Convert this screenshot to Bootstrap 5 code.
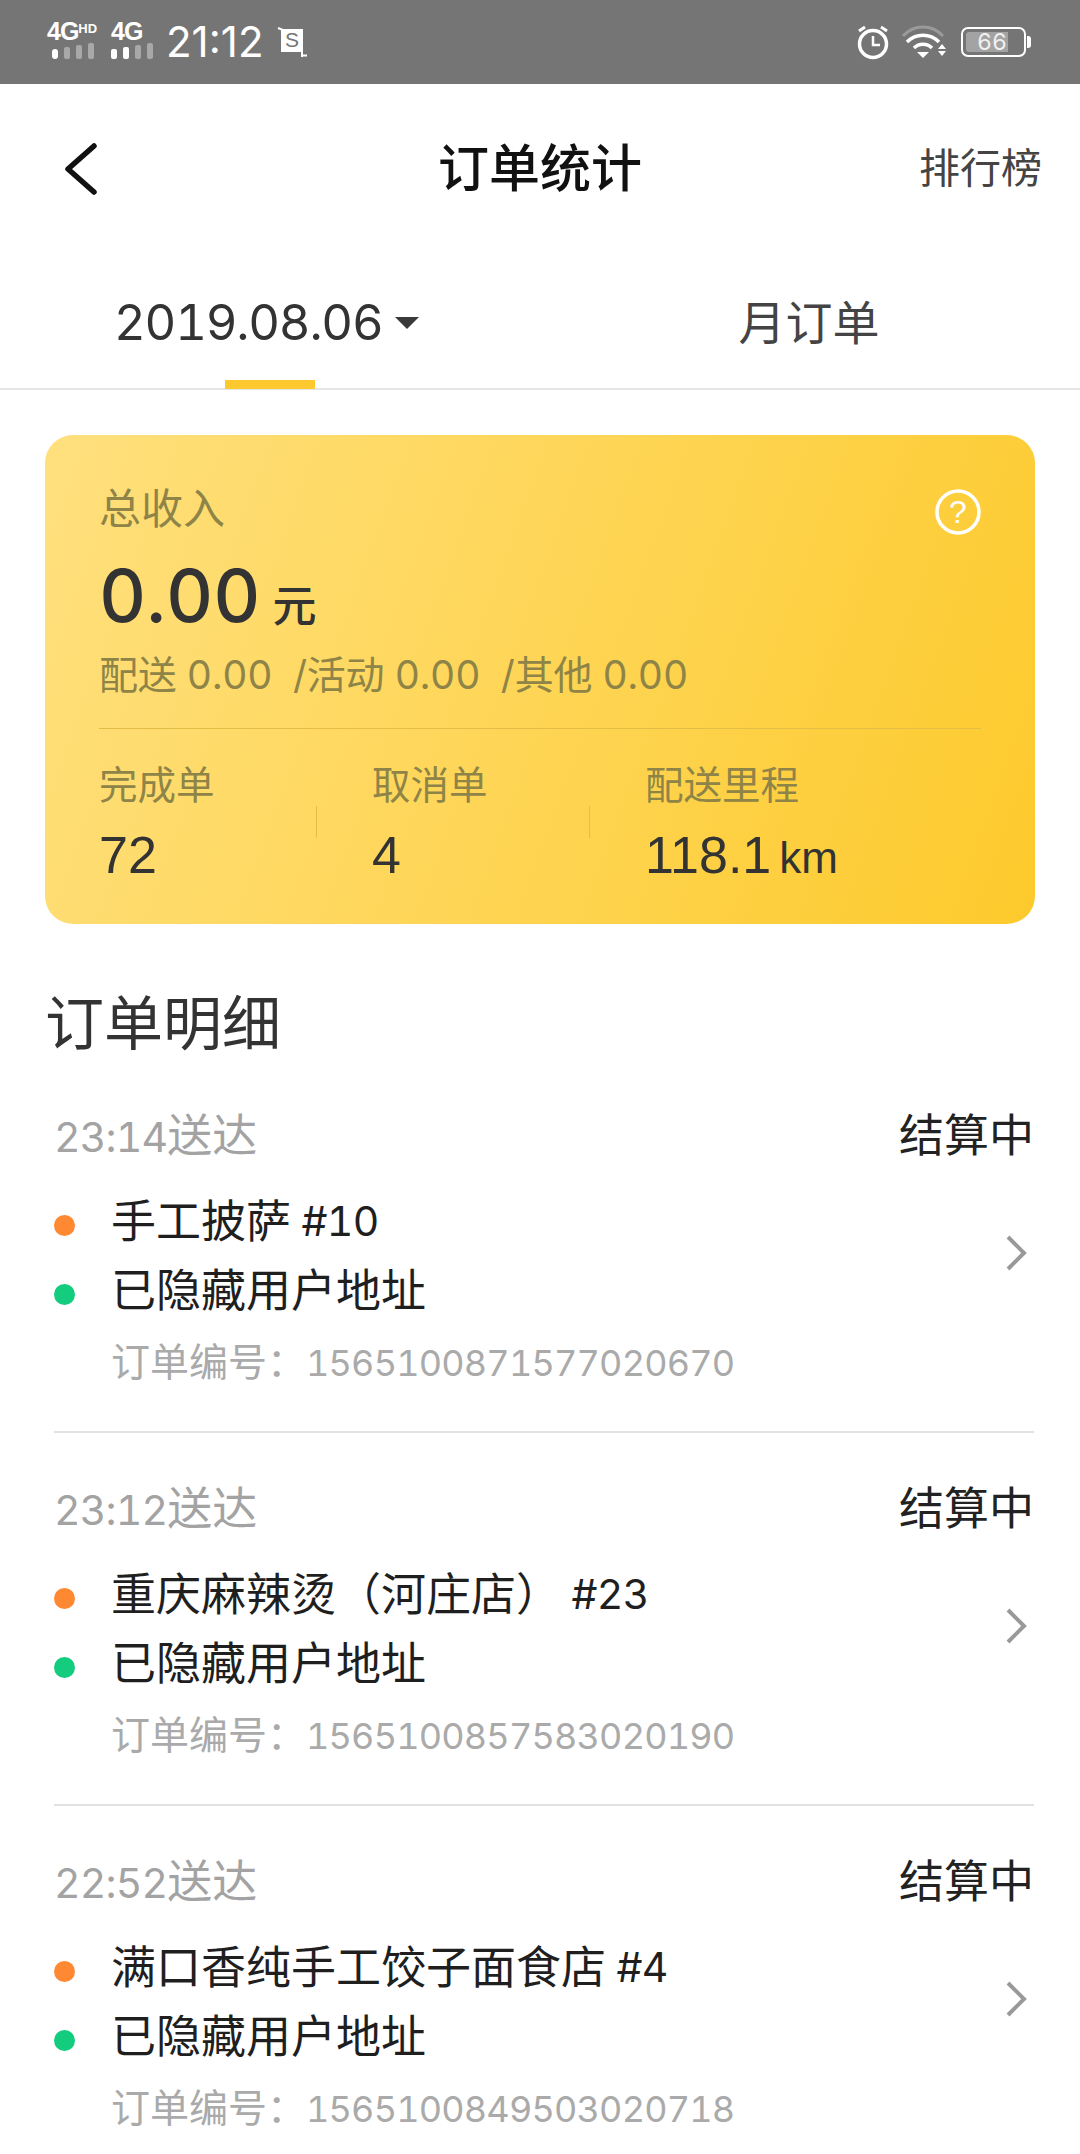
<!DOCTYPE html>
<html lang="zh">
<head>
    <meta charset="utf-8">
    <title>订单统计</title>
    <link href="https://cdn.jsdelivr.net/npm/bootstrap@5.3.3/dist/css/bootstrap.min.css" rel="stylesheet">
    <style>
        body {
            font-family: Inter, "Noto Sans CJK SC", sans-serif;
            font-variant-numeric: tabular-nums;
            background: #fff;
            color: #333;
            height: 2154px;
            overflow: hidden;
        }
        .status-bar { height: 84px; background: #757575; color: #fff; padding: 0 50px 0 47px; }
        .sig-block { margin-bottom: 3px; }
        .sig-label { font-family: "Liberation Sans", sans-serif; font-size: 25px; font-weight: 700; line-height: 20px; letter-spacing: -1px; }
        .sig-label sup { font-size: 13px; top: -7px; vertical-align: baseline; position: relative; letter-spacing: 0; }
        .clock { font-size: 42px; font-variant-numeric: proportional-nums; line-height: 84px; margin: 0 13px 0 13px; }
        .alarm-icon { margin-right: 12px; }
        .wifi-icon { margin-right: 14px; }
        .batt { width: 65px; height: 30px; border: 2px solid #fff; border-radius: 7px; padding: 3px; position: relative; margin-right: 4px; }
        .batt::after { content: ""; position: absolute; right: -7px; top: 7px; width: 4px; height: 12px; background: #fff; border-radius: 0 3px 3px 0; }
        .batt-fill { width: 42px; height: 100%; background: #a3a3a3; border-radius: 3px 0 0 3px; color: #f0f0f0; font-size: 23px; line-height: 20px; padding-left: 11px; }
        .top-nav { height: 170px; padding: 0 38px 0 63px; }
        .top-left { width: 200px; }
        .top-right { width: 225px; }
        .top-title { font-size: 51px; font-weight: 500; color: #111; }
        .top-link { font-size: 41px; color: #444; }
        .tab-row { height: 136px; border-bottom: 2px solid #e6e6e6; }
        .tab-day { width: 522px; padding-left: 114px; padding-top: 4px; font-size: 49px; letter-spacing: -1.2px; position: relative; }
        .tab-day::after { content: ""; position: absolute; left: 225px; bottom: -1px; width: 90px; height: 9px; background: #fdc92f; }
        .tab-caret { width: 0; height: 0; border: 12px solid transparent; border-top: 12px solid #3a3a3a; border-bottom: 0; margin-left: 12px; }
        .tab-month { width: 558px; padding-left: 16px; text-align: center; line-height: 138px; font-size: 47px; color: #444; }
        .income-card { height: 489px; margin: 45px 45px 0; padding: 49px 54px 0 54px; border-radius: 28px; background: linear-gradient(110deg, #ffe07e 0%, #fdca2c 100%); }
        .income-label { font-size: 42px; line-height: 50px; color: #8f8447; }
        .income-help { position: absolute; right: 54px; top: 54px; }
        .income-total { font-size: 73px; font-weight: 500; line-height: 90px; margin-top: 17px; color: #333; }
        .income-total span { font-size: 44px; margin-left: 12px; }
        .income-parts { font-size: 39px; letter-spacing: -.2px; line-height: 50px; margin-top: -1px; color: #8f8447; white-space: pre; }
        .income-line { border-top: 1px solid #e3bd45; margin-top: 28px; }
        .stat-col { width: 273px; position: relative; padding-top: 31px; }
        .stat-col + .stat-col::before { content: ""; position: absolute; left: -56px; top: 77px; height: 32px; border-left: 1px solid #e3bd45; }
        .stat-label { font-size: 38.5px; line-height: 50px; color: #8f8447; }
        .stat-num { font-family: "Liberation Sans", sans-serif; font-size: 52px; line-height: 70px; margin-top: 10px; color: #333; }
        .stat-num span { font-size: 44px; margin-left: 8px; }
        .section-title { font-size: 59px; line-height: 68px; margin: 66px 0 2px 45px; color: #333; }
        .order-row { height: 373px; margin: 0 46px 0 54px; padding-top: 46px; border-bottom: 2px solid #e2e2e2; }
        .order-head { line-height: 60px; font-size: 41px; }
        .order-time { color: #a3a3a3; letter-spacing: -.8px; }
        .order-state { color: #222; font-size: 45px; }
        .order-lines { margin-top: 20px; padding-right: 7px; }
        .order-line { line-height: 69px; font-size: 41px; letter-spacing: -.6px; color: #1f1f1f; white-space: pre; }
        .order-line b { font-weight: 400; font-size: 45px; letter-spacing: 0; }
        .order-dot { width: 21px; height: 21px; border-radius: 50%; margin-right: 36px; margin-top: 7px; }
        .dot-shop { background: #ff8833; }
        .dot-user { background: #13cc7d; }
        .order-arrow { margin-top: -6px; }
        .order-no { line-height: 70px; font-size: 36px; letter-spacing: -.8px; color: #aaa; padding-left: 57px; margin-top: 2px; }
        .order-no b { font-weight: 400; font-size: 39px; letter-spacing: 0; }
        .order-time b { font-weight: 400; font-size: 45px; letter-spacing: 0; }
    </style>
</head>
<body>
    <div class="status-bar d-flex align-items-center">
        <div class="sig-block me-2 pe-1">
            <div class="sig-label">4G<sup>HD</sup></div>
            <svg class="d-block" width="52" height="20" viewBox="0 0 52 20"><rect x="5" y="8" width="6" height="10" rx="3" fill="#fff"/><g fill="#a8a8a8"><rect x="17" y="6" width="6" height="12" rx="2"/><rect x="29" y="4" width="6" height="14" rx="2"/><rect x="41" y="2" width="6" height="16" rx="2"/></g></svg>
        </div>
        <div class="sig-block">
            <div class="sig-label">4G</div>
            <svg class="d-block" width="42" height="20" viewBox="0 0 42 20"><g fill="#fff"><rect x="0" y="8" width="6" height="10" rx="2"/><rect x="12" y="6" width="6" height="12" rx="2"/></g><g fill="#a8a8a8"><rect x="24" y="4" width="6" height="14" rx="2"/><rect x="36" y="2" width="6" height="16" rx="2"/></g></svg>
        </div>
        <div class="clock">21:12</div>
        <svg width="31" height="32" viewBox="0 0 31 32"><path d="M1 2l5 2M25 26v5M25 29.500h5" stroke="#fff" stroke-width="2" fill="none"/><rect x="4" y="3" width="22" height="23" fill="#fff"/><text x="15" y="21" font-size="21" text-anchor="middle" fill="#757575" font-family="Liberation Sans">S</text></svg>
        <div class="flex-grow-1"></div>
        <svg width="32" height="36" viewBox="0 0 32 36" class="alarm-icon"><circle cx="16" cy="20" r="13.500" fill="none" stroke="#fff" stroke-width="3.500"/><path d="M16 12v9h7" fill="none" stroke="#fff" stroke-width="2.500"/><path d="M2 7l6-4M30 7l-6-4" stroke="#fff" stroke-width="3"/></svg>
        <svg width="46" height="34" viewBox="0 0 46 34" class="wifi-icon"><path d="M2 11C13 -1 31 -1 42 11" fill="none" stroke="#9a9a9a" stroke-width="3"/><path d="M6 17C15 8 29 8 38 17" fill="none" stroke="#fff" stroke-width="3.500"/><path d="M13 23C18 18 26 18 31 23" fill="none" stroke="#fff" stroke-width="3.500"/><path d="M16 27h12l-6 6z" fill="#fff"/><path d="M37 24l4-5 4 5zM37 26l4 5 4-5z" fill="#fff"/></svg>
        <div class="batt"><div class="batt-fill">66</div></div>
    </div>

    <div class="top-nav d-flex align-items-center justify-content-between">
        <div class="top-left">
            <svg class="d-block" width="34" height="52" viewBox="0 0 34 52"><path d="M31 3L5 26l26 23" fill="none" stroke="#111" stroke-width="5.500" stroke-linecap="round" stroke-linejoin="round"/></svg>
        </div>
        <div class="top-title">订单统计</div>
        <div class="top-right text-end top-link">排行榜</div>
    </div>

    <div class="tab-row d-flex">
        <div class="tab-day d-flex align-items-center">2019.08.06<span class="tab-caret"></span></div>
        <div class="tab-month">月订单</div>
    </div>

    <div class="income-card position-relative">
        <div class="income-label">总收入</div>
        <svg class="income-help" width="46" height="46" viewBox="0 0 46 46"><circle cx="23" cy="23" r="21" fill="none" stroke="#fff" stroke-width="3.500"/><text x="23" y="34" font-size="32" text-anchor="middle" fill="#fff" font-family="Liberation Sans">?</text></svg>
        <div class="income-total">0.00<span>元</span></div>
        <div class="income-parts">配送 0.00  /活动 0.00  /其他 0.00</div>
        <div class="income-line"></div>
        <div class="d-flex">
            <div class="stat-col">
                <div class="stat-label">完成单</div>
                <div class="stat-num">72</div>
            </div>
            <div class="stat-col">
                <div class="stat-label">取消单</div>
                <div class="stat-num">4</div>
            </div>
            <div class="stat-col">
                <div class="stat-label">配送里程</div>
                <div class="stat-num">118.1<span>km</span></div>
            </div>
        </div>
    </div>

    <div class="section-title">订单明细</div>

    <div class="order-row">
        <div class="order-head d-flex justify-content-between">
            <span class="order-time">23:14<b>送达</b></span><span class="order-state">结算中</span>
        </div>
        <div class="order-lines d-flex align-items-center justify-content-between">
            <div>
                <div class="order-line d-flex align-items-center"><span class="order-dot dot-shop"></span><b>手工披萨</b> #10</div>
                <div class="order-line d-flex align-items-center"><span class="order-dot dot-user"></span><b>已隐藏用户地址</b></div>
            </div>
            <svg class="order-arrow" width="22" height="36" viewBox="0 0 22 36"><path d="M3 2l16 16L3 34" fill="none" stroke="#999" stroke-width="4"/></svg>
        </div>
        <div class="order-no"><b>订单编号：</b>1565100871577020670</div>
    </div>

    <div class="order-row">
        <div class="order-head d-flex justify-content-between">
            <span class="order-time">23:12<b>送达</b></span><span class="order-state">结算中</span>
        </div>
        <div class="order-lines d-flex align-items-center justify-content-between">
            <div>
                <div class="order-line d-flex align-items-center"><span class="order-dot dot-shop"></span><b>重庆麻辣烫（河庄店）</b> #23</div>
                <div class="order-line d-flex align-items-center"><span class="order-dot dot-user"></span><b>已隐藏用户地址</b></div>
            </div>
            <svg class="order-arrow" width="22" height="36" viewBox="0 0 22 36"><path d="M3 2l16 16L3 34" fill="none" stroke="#999" stroke-width="4"/></svg>
        </div>
        <div class="order-no"><b>订单编号：</b>1565100857583020190</div>
    </div>

    <div class="order-row border-0">
        <div class="order-head d-flex justify-content-between">
            <span class="order-time">22:52<b>送达</b></span><span class="order-state">结算中</span>
        </div>
        <div class="order-lines d-flex align-items-center justify-content-between">
            <div>
                <div class="order-line d-flex align-items-center"><span class="order-dot dot-shop"></span><b>满口香纯手工饺子面食店</b> #4</div>
                <div class="order-line d-flex align-items-center"><span class="order-dot dot-user"></span><b>已隐藏用户地址</b></div>
            </div>
            <svg class="order-arrow" width="22" height="36" viewBox="0 0 22 36"><path d="M3 2l16 16L3 34" fill="none" stroke="#999" stroke-width="4"/></svg>
        </div>
        <div class="order-no"><b>订单编号：</b>1565100849503020718</div>
    </div>

    <script src="https://cdn.jsdelivr.net/npm/bootstrap@5.3.3/dist/js/bootstrap.bundle.min.js"></script>
</body>
</html>
